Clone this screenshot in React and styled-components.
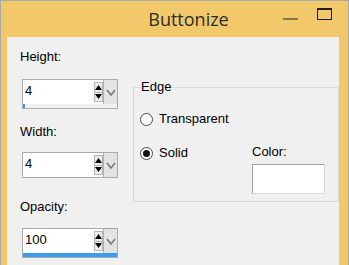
import React from "react";
import styled, { createGlobalStyle } from "styled-components";

const GlobalStyle = createGlobalStyle`
  html, body {
    margin: 0;
    padding: 0;
  }
  body {
    font-family: "Liberation Sans", Arial, sans-serif;
    background: #f0f0f0;
  }
`;

function Spinner({ value, max, top, bar }) {
  return (
    <SpinBox $top={top}>
      <SpinTop>
        <Edit>{value}</Edit>
        <SpinButtons>
          <SpinButton>
            <svg width="7" height="5" viewBox="0 0 7 5">
              <polygon points="0,5 7,5 3.5,0" fill="#000" />
            </svg>
          </SpinButton>
          <SpinButton>
            <svg width="7" height="5" viewBox="0 0 7 5">
              <polygon points="0,0 7,0 3.5,5" fill="#000" />
            </svg>
          </SpinButton>
        </SpinButtons>
        <DropButton>
          <svg width="10" height="7" viewBox="0 0 10 7">
            <polyline points="1,1 5,6 9,1" fill="none" stroke="#7a7a7a" strokeWidth="1.6" />
          </svg>
        </DropButton>
      </SpinTop>
      {bar && (
        <BarTrack>
          <BarFill style={{ width: `${(value / max) * 100}%` }} />
        </BarTrack>
      )}
    </SpinBox>
  );
}

function Radio({ checked, children, top }) {
  return (
    <RadioRow $top={top}>
      <Circle>{checked && <Dot />}</Circle>
      {children}
    </RadioRow>
  );
}

export default function App() {
  return (
    <>
      <GlobalStyle />
      <Window>
        <TitleBar>
          <Title>Buttonize</Title>
          <Controls>
            <MinGlyph />
            <MaxGlyph />
          </Controls>
        </TitleBar>
        <Client>
          <LeftColumn>
            <Label $top={0}>Height:</Label>
            <Spinner value={4} max={250} top={14} bar />
            <Label $top={15}>Width:</Label>
            <Spinner value={4} max={250} top={12} />
            <Label $top={21}>Opacity:</Label>
            <Spinner value={100} max={100} top={13} bar />
          </LeftColumn>
          <GroupBox>
            <Legend>Edge</Legend>
            <Radio top={16}>Transparent</Radio>
            <Row>
              <Radio checked top={1}>Solid</Radio>
              <ColorBlock>
                <Label $top={0}>Color:</Label>
                <ColorWell />
              </ColorBlock>
            </Row>
          </GroupBox>
        </Client>
      </Window>
    </>
  );
}

const Window = styled.div`
  width: 349px;
  height: 265px;
  box-sizing: border-box;
  border: 1px solid #a9a9a9;
  border-bottom: none;
  background: #f1c96b;
  display: flex;
  flex-direction: column;
  overflow: hidden;
`;

const TitleBar = styled.div`
  height: 36px;
  flex-shrink: 0;
  display: flex;
  align-items: flex-start;
`;

const Title = styled.div`
  flex: 1;
  padding-left: 93px;
  text-align: center;
  font-family: "Open Sans", sans-serif;
  font-size: 18px;
  line-height: 36px;
  color: #2d2d2d;
`;

const Controls = styled.div`
  display: flex;
  align-items: flex-start;
  gap: 19px;
  padding-right: 16px;
`;

const MinGlyph = styled.div`
  width: 15px;
  height: 2px;
  margin-top: 17px;
  background: #8a7748;
`;

const MaxGlyph = styled.div`
  width: 15px;
  height: 12px;
  margin-top: 7px;
  box-sizing: border-box;
  border: 1px solid #1e1e1e;
  border-top-width: 2px;
`;

const Client = styled.div`
  flex: 1;
  margin: 0 9px 0 6px;
  padding: 12px 0 0 13px;
  background: #f0f0f0;
  display: flex;
  align-items: flex-start;
`;

const LeftColumn = styled.div`
  width: 113px;
  display: flex;
  flex-direction: column;
`;

const Label = styled.div`
  margin-top: ${(p) => p.$top}px;
  font-size: 13px;
  line-height: 16px;
  color: #000;
`;

const SpinBox = styled.div`
  margin: ${(p) => p.$top}px 0 0 2px;
  width: 96px;
  box-sizing: border-box;
  border: 1px solid #ababab;
  background: #fff;
  display: flex;
  flex-direction: column;
`;

const SpinTop = styled.div`
  display: flex;
  height: 24px;
`;

const Edit = styled.div`
  flex: 1;
  padding-left: 2px;
  font-size: 13px;
  line-height: 22px;
`;

const SpinButtons = styled.div`
  width: 9px;
  display: flex;
  flex-direction: column;
  padding: 2px 0;
  gap: 0;
`;

const SpinButton = styled.div`
  flex: 1;
  display: flex;
  align-items: center;
  justify-content: center;
  background: #ececec;
  border: 1px solid #b4b4b4;
  margin-top: -1px;
  &:first-child {
    margin-top: 0;
  }
`;

const DropButton = styled.div`
  width: 13px;
  background: #e3e3e3;
  border-left: 1px solid #b0b0b0;
  display: flex;
  align-items: center;
  justify-content: center;
`;

const BarTrack = styled.div`
  height: 4px;
  background: #f2f2f2;
`;

const BarFill = styled.div`
  height: 100%;
  background: #3d9be9;
`;

const GroupBox = styled.fieldset`
  margin: 30px 0 0 0;
  width: 206px;
  box-sizing: border-box;
  border: 1px solid #d9d9d9;
  padding: 0 13px 7px 6px;
  display: flex;
  flex-direction: column;
`;

const Legend = styled.legend`
  padding: 0 1px;
  font-size: 13px;
  line-height: 16px;
`;

const RadioRow = styled.div`
  margin-top: ${(p) => p.$top}px;
  display: flex;
  align-items: center;
  gap: 6px;
  font-size: 13px;
  line-height: 16px;
`;

const Circle = styled.div`
  width: 13px;
  height: 13px;
  box-sizing: border-box;
  border: 1px solid #4a4a4a;
  border-radius: 50%;
  background: #fff;
  display: flex;
  align-items: center;
  justify-content: center;
`;

const Dot = styled.div`
  width: 7px;
  height: 7px;
  border-radius: 50%;
  background: #141414;
`;

const Row = styled.div`
  margin-top: 17px;
  display: flex;
  align-items: flex-start;
`;

const ColorBlock = styled.div`
  margin-left: auto;
  display: flex;
  flex-direction: column;
`;

const ColorWell = styled.div`
  margin-top: 4px;
  width: 73px;
  height: 30px;
  box-sizing: border-box;
  background: #fff;
  border: 1px solid #d9d9d9;
  border-top-color: #a0a0a0;
  border-left-color: #a0a0a0;
`;
